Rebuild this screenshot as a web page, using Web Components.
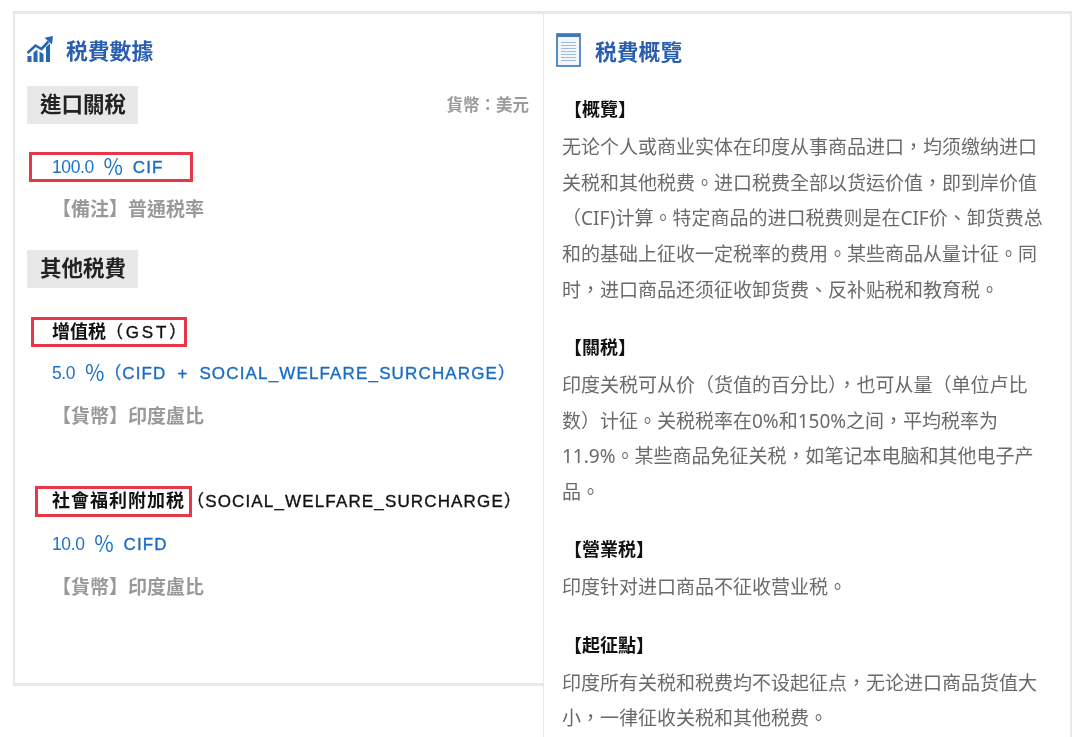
<!DOCTYPE html>
<html lang="zh-Hant"><head><meta charset="utf-8"><style>
html,body{margin:0;height:737px;overflow:hidden;background:#fff}
body{font-family:"Liberation Sans","Noto Sans CJK TC",sans-serif}
</style></head><body>
<x-page>
<x-panel slot="left" heading="税費數據">
  <svg slot="icon" width="26" height="26" viewBox="0 0 26 26" fill="#2667b3"><rect x="0.500" y="20" width="4" height="6"/><path d="M6.500 26V16.500l4-3V26Z"/><path d="M12.500 26V15.500l4 2.500V26Z"/><path d="M19 26V11l4-3.500V26Z"/><path d="M0.500 17 L8.500 9.500 L14.500 13 L21.500 5.500" fill="none" stroke="#2667b3" stroke-width="2.600"/><path d="M17.500 1.800 L26 0 L25 8.500 Z"/></svg>
  <x-data-head><x-tag>進口關稅</x-tag><x-cur>貨幣：美元</x-cur></x-data-head>
  <x-red-box style="margin:28px 0 0 2px;width:164px;padding-left:20px;height:30px"><x-rate>100.0<x-pct></x-pct><x-code>CIF</x-code></x-rate></x-red-box>
  <x-note style="margin-top:15px">【備注】普通税率</x-note>
  <x-tag style="margin-top:27px">其他税費</x-tag>
  <x-red-box style="margin:29px 0 0 4px;width:156px;padding-left:18px;height:30px"><x-name>增值税<x-code dark style="letter-spacing:2.800px">（GST）</x-code></x-name></x-red-box>
  <x-rate indent style="margin-top:13px">5.0<x-pct></x-pct><x-code style="margin-left:-10px;word-spacing:5px">（CIFD + SOCIAL_WELFARE_SURCHARGE）</x-code></x-rate>
  <x-note style="margin-top:18px">【貨幣】印度盧比</x-note>
  <x-line style="margin-top:56px"><x-red-box style="margin-left:8px;width:157px;padding-left:14px;height:31px"><x-name wide>社會福利附加税</x-name></x-red-box><x-code dark style="margin-left:-5px">（SOCIAL_WELFARE_SURCHARGE）</x-code></x-line>
  <x-rate indent style="margin-top:14px">10.0<x-pct></x-pct><x-code>CIFD</x-code></x-rate>
  <x-note style="margin-top:18px">【貨幣】印度盧比</x-note>
</x-panel>
<x-panel slot="right" heading="税費概覽" right>
  <svg slot="icon" width="25" height="34" viewBox="0 0 25 34"><rect x="1" y="1" width="23" height="32" fill="#f3f7fc" stroke="#3f78bd" stroke-width="1.700"/><rect x="1" y="1" width="23" height="3" fill="#3f78bd"/><path d="M5 9.500H20M5 12.500H20M5 15.500H20M5 18.500H20M5 21.500H20M5 24.500H20M5 27.500H20" stroke="#9dbbe0" stroke-width="1"/></svg>
  <x-article heading="【概覽】">无论个人或商业实体在印度从事商品进口，均须缴纳进口<br>关税和其他税费。进口税费全部以货运价值，即到岸价值<br>（CIF)计算。特定商品的进口税费则是在CIF价、卸货费总<br>和的基础上征收一定税率的费用。某些商品从量计征。同<br>时，进口商品还须征收卸货费、反补贴税和教育税。</x-article>
  <x-article heading="【關税】">印度关税可从价（货值的百分比），也可从量（单位卢比<br>数）计征。关税税率在0%和150%之间，平均税率为<br>11.9%。某些商品免征关税，如笔记本电脑和其他电子产<br>品。</x-article>
  <x-article heading="【營業税】">印度针对进口商品不征收营业税。</x-article>
  <x-article heading="【起征點】">印度所有关税和税费均不设起征点，无论进口商品货值大<br>小，一律征收关税和其他税费。</x-article>
</x-panel>
</x-page>
<script>
function def(name, css, html){
  customElements.define(name, class extends HTMLElement{
    constructor(){super();const r=this.attachShadow({mode:'open'});
      r.innerHTML='<style>'+css+'</style>'+html;}
  });
}
const CJK='"Liberation Sans","Noto Sans CJK TC",sans-serif';
def('x-page',':host{display:grid;grid-template-columns:530px 529px;align-items:start;padding:11px 0 0 13px;width:1080px;box-sizing:border-box;filter:blur(.3px)}','<slot name="left"></slot><slot name="right"></slot>');
customElements.define('x-panel',class extends HTMLElement{
  connectedCallback(){
    if(this.shadowRoot)return;
    const r=this.attachShadow({mode:'open'}),h=this.getAttribute('heading');
    r.innerHTML=`<style>
    :host{display:block;box-sizing:border-box;border:solid #e8e8e8;border-width:3px 0 3px 2px;height:675px;padding:22px 13px 0 12px}
    :host([right]){border-width:3px 2px 0 1px;height:800px;padding:19px 12px 0 12px}
    header{display:flex;align-items:center;gap:13px;height:26px;font:bold 21.800px ${CJK};color:#2a5fb0;margin-bottom:25px}
    :host([right]) header{height:34px;gap:14px;margin-bottom:22px}
    </style><header><slot name="icon"></slot><span>${h}</span></header><slot></slot>`;
  }
});
def('x-data-head',':host{display:flex;justify-content:space-between;align-items:center;margin-top:-1px}','<slot></slot>');
def('x-tag',`:host{display:block;width:max-content;background:#e8e8e8;padding:1px 12px 0 13px;height:37px;font:bold 21.500px/37px ${CJK};color:#222}`,'<slot></slot>');
def('x-cur',`:host{display:block;font:bold 16.500px ${CJK};color:#9a9a9a;margin:-2px 1px 0 0}`,'<slot></slot>');
def('x-red-box',':host{display:block;box-sizing:border-box;border:3px solid #e8374a;flex:none}','<slot></slot>');
def('x-rate',`:host{display:block;font:17.500px/24px ${CJK};color:#1a73c9;letter-spacing:-.4px;white-space:nowrap}:host([indent]){margin-left:25px;line-height:26px}`,'<slot></slot>');
def('x-code',`:host{display:inline-block;font:17px/24px ${CJK};letter-spacing:1.150px;word-spacing:3px;color:#1a6cc4;-webkit-text-stroke:.35px currentColor;white-space:nowrap}:host([dark]){color:#111}`,'<slot></slot>');
def('x-pct',`:host{display:inline-block;font:21px/20px "Noto Sans CJK TC",sans-serif;letter-spacing:0;margin:0 10px 0 9px;width:20px;color:#1a73c9;vertical-align:-1px}`,'％');
def('x-name',`:host{display:inline-block;font:bold 18px/24px ${CJK};color:#111;white-space:nowrap}:host([wide]){letter-spacing:1px;line-height:25px}`,'<slot></slot>');
def('x-note',`:host{display:block;font:bold 19px/26px ${CJK};color:#999;margin-left:25px}`,'<slot></slot>');
def('x-line',':host{display:flex;align-items:center}','<slot></slot>');
customElements.define('x-article',class extends HTMLElement{
  connectedCallback(){
    if(this.shadowRoot)return;
    const r=this.attachShadow({mode:'open'}),h=this.getAttribute('heading');
    r.innerHTML=`<style>:host{display:block;margin:0 0 18.500px 6px}
    h3{margin:0;font:bold 18px/26px ${CJK};color:#111;padding-top:8px;margin-left:2px}
    div{font:19px/35.700px "Noto Sans","Noto Sans CJK SC",sans-serif;color:#6a6a6a;white-space:nowrap;margin-top:7px}
    </style><h3>${h}</h3><div><slot></slot></div>`;
  }
});
</script>
</body></html>
